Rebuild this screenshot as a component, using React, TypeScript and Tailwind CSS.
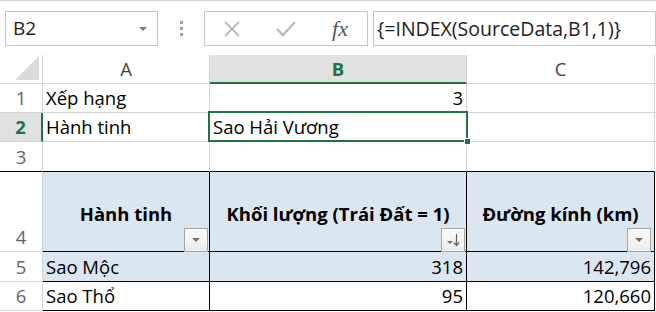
import React from "react";

const cellFont = { fontFamily: '"Open Sans", "Noto Sans", sans-serif' };

function FilterButton({ sorted }: { sorted?: boolean }) {
  return (
    <div className="w-[24px] h-[24px] border border-[#a6a6a6] bg-gradient-to-b from-[#fbfbfb] to-[#ececec] flex items-center justify-center">
      {sorted ? (
        <svg width="18" height="14" viewBox="0 0 18 14">
          <path d="M3 8 L9 8 L6 11 Z" fill="#707070" />
          <path d="M12.5 1 L12.5 12" stroke="#606060" strokeWidth="1.2" />
          <path d="M10 9.5 L12.5 12.5 L15 9.5" stroke="#606060" strokeWidth="1.2" fill="none" />
        </svg>
      ) : (
        <svg width="12" height="8" viewBox="0 0 12 8">
          <path d="M2 2 L10 2 L6 6 Z" fill="#707070" />
        </svg>
      )}
    </div>
  );
}

export default function App() {
  return (
    <div className="w-[656px] h-[312px] bg-white overflow-hidden" style={cellFont}>
      {/* formula bar */}
      <div className="h-[55px] border-t border-[#d4d4d4] flex items-start pt-[10px] pl-[5px]">
        <div className="w-[153px] h-[35px] border border-[#c6c6c6] flex items-center justify-between pl-[7px] pr-[9px]">
          <span className="text-[19px] text-[#222]">B2</span>
          <svg width="10" height="6" viewBox="0 0 10 6">
            <path d="M1 1 L9 1 L5 5 Z" fill="#7a7a7a" />
          </svg>
        </div>
        <div className="w-[46px] h-[35px] flex flex-col items-center justify-center gap-[3px]">
          <div className="w-[3px] h-[3px] bg-[#a0a0a0]" />
          <div className="w-[3px] h-[3px] bg-[#a0a0a0]" />
          <div className="w-[3px] h-[3px] bg-[#a0a0a0]" />
        </div>
        <div className="w-[164px] h-[35px] border border-[#c6c6c6] flex items-center">
          <div className="w-[54px] flex justify-center">
            <svg width="20" height="20" viewBox="0 0 20 20">
              <path d="M3 3 L17 17 M17 3 L3 17" stroke="#bcbcbc" strokeWidth="2" />
            </svg>
          </div>
          <div className="w-[54px] flex justify-center">
            <svg width="22" height="20" viewBox="0 0 22 20">
              <path d="M2 10 L8 16 L20 3" stroke="#bcbcbc" strokeWidth="2.4" fill="none" />
            </svg>
          </div>
          <div className="w-[54px] flex justify-center">
            <span className="text-[22px] italic text-[#555]" style={{ fontFamily: '"Liberation Serif", serif' }}>fx</span>
          </div>
        </div>
        <div className="ml-[5px] flex-1 h-[35px] border border-[#c6c6c6] flex items-center pl-[3px]">
          <span className="text-[19.5px] text-[#222]">{"{=INDEX(SourceData,B1,1)}"}</span>
        </div>
      </div>

      {/* grid */}
      <div className="grid grid-cols-[43px_167px_257px_188px_1px] grid-rows-[29px_29px_29px_30px_80px_30px_29px] text-[18.5px] text-black">
        {/* column headers */}
        <div className="border-r border-b border-[#d4d4d4] flex items-end justify-end pr-[3px] pb-[3px]">
          <svg width="24" height="24" viewBox="0 0 24 24">
            <path d="M24 0 L24 24 L0 24 Z" fill="#dadada" />
          </svg>
        </div>
        <div className="border-r border-b border-[#d4d4d4] flex items-center justify-center text-[#444]">A</div>
        <div className="border-r border-b-2 border-b-[#217346] border-r-[#d4d4d4] bg-[#e1e1e1] flex items-center justify-center font-bold text-[#217346]">B</div>
        <div className="border-r border-b border-[#d4d4d4] flex items-center justify-center text-[#444]">C</div>
        <div className="border-b border-[#d4d4d4]" />

        {/* row 1 */}
        <div className="border-r border-b border-[#d4d4d4] flex items-end justify-center text-[#666]">1</div>
        <div className="border-r border-b border-[#d4d4d4] flex items-end pl-[3px]">Xếp hạng</div>
        <div className="border-r border-b border-[#d4d4d4] flex items-end justify-end pr-[3px]">3</div>
        <div className="border-r border-b border-[#d4d4d4]" />
        <div className="border-b border-[#d4d4d4]" />

        {/* row 2 */}
        <div className="border-r-2 border-r-[#217346] border-b border-b-[#d4d4d4] bg-[#e1e1e1] flex items-end justify-center font-bold text-[#217346]">2</div>
        <div className="border-r border-b border-[#d4d4d4] flex items-end pl-[3px]">Hành tinh</div>
        <div className="relative border-b border-[#d4d4d4] flex items-end pl-[3px]">
          <div className="absolute left-[-2px] top-[-2px] right-[-1px] bottom-[-1px] border-2 border-[#217346]" />
          <div className="absolute right-[-4px] bottom-[-4px] w-[7px] h-[7px] bg-[#217346] border border-white" />
          Sao Hải Vương
        </div>
        <div className="border-r border-b border-[#d4d4d4]" />
        <div className="border-b border-[#d4d4d4]" />

        {/* row 3 */}
        <div className="border-r border-b border-[#d4d4d4] border-b-black flex items-end justify-center text-[#666]">3</div>
        <div className="border-r border-b border-[#d4d4d4] border-b-black" />
        <div className="border-r border-b border-r-[#d4d4d4] border-b-black" />
        <div className="border-r border-b border-r-[#d4d4d4] border-b-black" />
        <div className="border-b border-[#d4d4d4]" />

        {/* row 4: table header */}
        <div className="border-r border-b border-[#d4d4d4] flex items-end justify-center text-[#666]">4</div>
        <div className="border-r border-b border-black bg-[#dce6f1] flex flex-col items-end">
          <div className="flex-1 w-full flex items-center justify-center font-bold pt-[28px]">Hành tinh</div>
          <div className="pr-[1px] pb-[1px]"><FilterButton /></div>
        </div>
        <div className="border-r border-b border-black bg-[#dce6f1] flex flex-col items-end">
          <div className="flex-1 w-full flex items-center justify-center font-bold pt-[28px]">Khối lượng (Trái Đất = 1)</div>
          <div className="pr-[1px] pb-[1px]"><FilterButton sorted /></div>
        </div>
        <div className="border-r border-b border-black bg-[#dce6f1] flex flex-col items-end">
          <div className="flex-1 w-full flex items-center justify-center font-bold pt-[28px]">Đường kính (km)</div>
          <div className="pr-[3px] pb-[1px]"><FilterButton /></div>
        </div>
        <div className="border-b border-[#d4d4d4]" />

        {/* row 5 */}
        <div className="border-r border-b border-[#d4d4d4] flex items-end justify-center text-[#666]">5</div>
        <div className="border-r border-b border-black bg-[#dce6f1] flex items-end pl-[3px]">Sao Mộc</div>
        <div className="border-r border-b border-black bg-[#dce6f1] flex items-end justify-end pr-[3px]">318</div>
        <div className="border-r border-b border-black bg-[#dce6f1] flex items-end justify-end pr-[3px]">142,796</div>
        <div className="border-b border-[#d4d4d4]" />

        {/* row 6 */}
        <div className="border-r border-b border-[#d4d4d4] flex items-end justify-center text-[#666]">6</div>
        <div className="border-r border-b border-black flex items-end pl-[3px]">Sao Thổ</div>
        <div className="border-r border-b border-black flex items-end justify-end pr-[3px]">95</div>
        <div className="border-r border-b border-black flex items-end justify-end pr-[3px]">120,660</div>
        <div className="border-b border-[#d4d4d4]" />
      </div>
    </div>
  );
}
